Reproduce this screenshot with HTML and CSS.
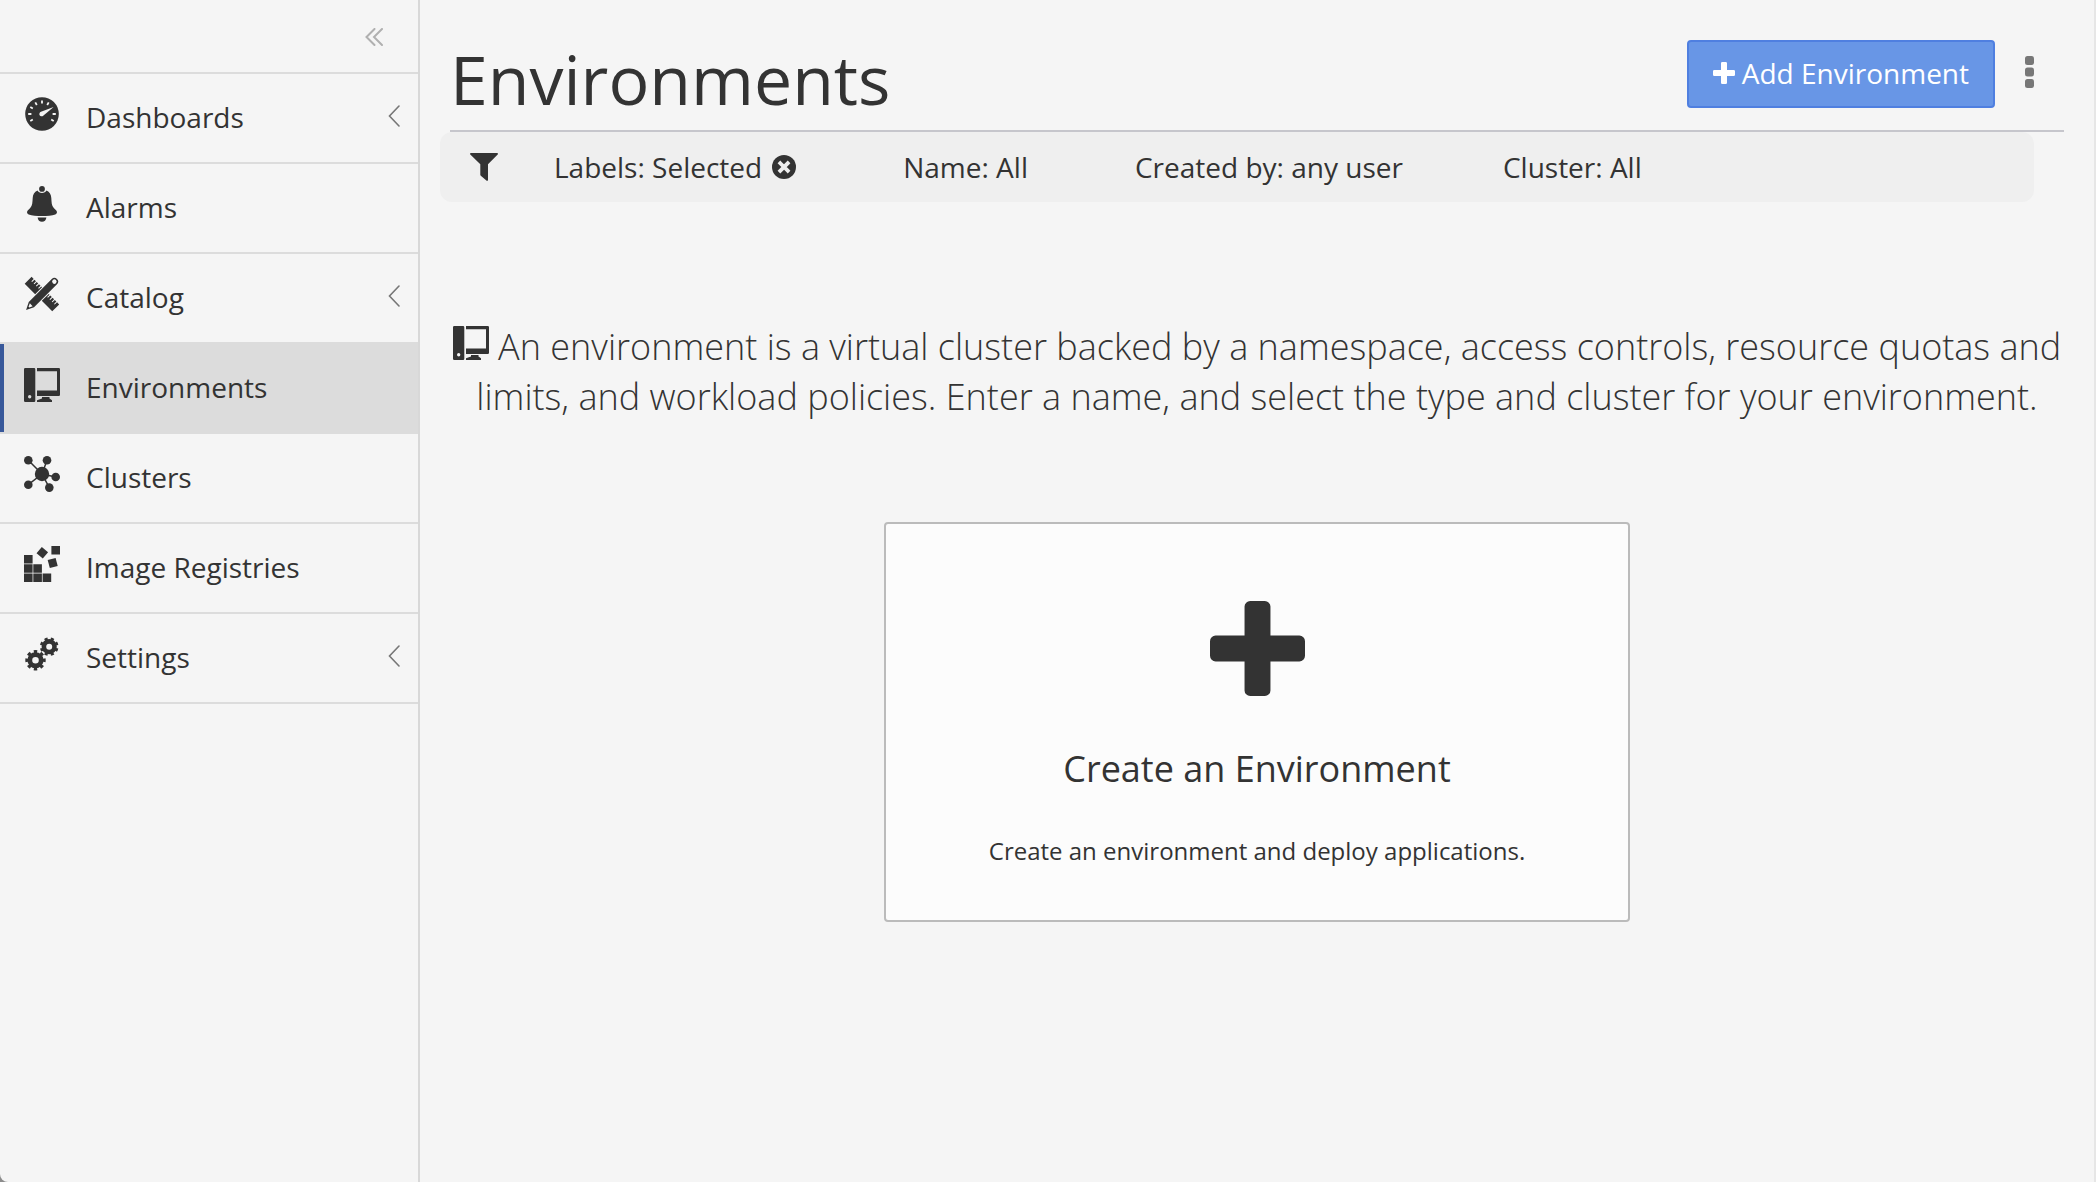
FILE: index.html
```html
<!DOCTYPE html>
<html lang="en">
<head>
<meta charset="utf-8">
<meta name="viewport" content="width=device-width, initial-scale=1">
<title>Environments</title>
<link rel="stylesheet" href="styles.css">
</head>
<body>
<svg class="symbols" aria-hidden="true">
  <symbol id="computer" viewBox="0 0 36 36">
    <path fill-rule="evenodd" d="M1.2 2h8.9a1.200 1.200 0 0 1 1.200 1.200v31.600a1.200 1.200 0 0 1-1.200 1.200H1.200A1.200 1.200 0 0 1 0 34.800V3.200A1.200 1.200 0 0 1 1.200 2zM5.700 29a1.700 1.700 0 1 0 0 3.400 1.700 1.700 0 0 0 0-3.400z"/>
    <path fill-rule="evenodd" d="M13 2h21.800A1.200 1.200 0 0 1 36 3.200v25.600a1.200 1.200 0 0 1-1.200 1.200H13v-5.500h20V5.300H13z"/>
    <path d="M18 31h7.500v1.500l2.500 1.800V36H13v-1.700l5-1.800z"/>
  </symbol>
  <symbol id="plus" viewBox="0 0 22 22">
    <path d="M9.300 0h3.400A1.300 1.300 0 0 1 14 1.300V8h6.700A1.300 1.300 0 0 1 22 9.300v3.400a1.300 1.300 0 0 1-1.300 1.300H14v6.700a1.300 1.300 0 0 1-1.300 1.300H9.300A1.300 1.300 0 0 1 8 20.700V14H1.300A1.300 1.300 0 0 1 0 12.700V9.300A1.300 1.300 0 0 1 1.300 8H8V1.300A1.300 1.300 0 0 1 9.300 0z"/>
  </symbol>
  <symbol id="chevron" viewBox="0 0 12 22">
    <path d="M11 1 1.500 11 11 21" fill="none" stroke="#777" stroke-width="1.600" stroke-linecap="round"/>
  </symbol>
</svg>
<div class="app">
  <aside class="sidebar">
    <div class="sidebar-top">
      <button class="collapse" aria-label="Collapse menu">
        <svg width="18" height="18" viewBox="0 0 18 18"><path d="M9.500 1 1.500 9l8 8M17 1 9 9l8 8" fill="none" stroke="#b0b0b0" stroke-width="2" stroke-linecap="round"/></svg>
      </button>
    </div>
    <nav class="menu">
      <a class="item" href="#dashboards">
        <svg class="icon" viewBox="0 0 36 36">
          <circle cx="18" cy="18" r="16.800"/>
          <g stroke="#f5f5f5" stroke-width="1.800">
            <path d="M18 4.500v3M4.200 18h3.200M28.600 18h3.200M11.300 6.400l1.500 2.600M24.700 6.400l-1.500 2.600M6.300 11l2.500 1.500M6.300 25l2.500-1.500M29.700 25l-2.500-1.500"/>
          </g>
          <path fill="#f5f5f5" d="M29.600 11 17 15.800a2.300 2.300 0 1 0 2.200 3.900z"/>
        </svg>
        <span class="label">Dashboards</span>
        <svg class="chevron"><use href="#chevron"/></svg>
      </a>
      <a class="item" href="#alarms">
        <svg class="icon" viewBox="0 0 36 36">
          <circle cx="18" cy="2.900" r="2.900"/>
          <path d="M13.500 4.600c.8 1.500 2.400 2.500 4.500 2.500s3.700-1 4.500-2.500c3.200 1.300 4.600 4.200 4.800 7.400.3 4.200.2 7.600 2.500 10l2.500 2.600c1.300 1.500.7 3.200-1 3.900-3.300 1.200-8 1.600-13.300 1.600s-10-.4-13.300-1.600c-1.700-.7-2.300-2.400-1-3.900L6.200 22c2.300-2.400 2.200-5.800 2.500-10 .2-3.200 1.600-6.100 4.800-7.400zM13.600 31.400h8.800c-.3 2.600-2 4.400-4.400 4.400s-4.100-1.800-4.400-4.400z"/>
        </svg>
        <span class="label">Alarms</span>
      </a>
      <a class="item" href="#catalog">
        <svg class="icon" viewBox="0 0 36 36">
          <g transform="rotate(45 18 18)">
            <path d="M-1.500 13.200h3v3.300h1v-3.300h2.200v3.300h1v-3.300h2.200v3.300h1v-3.300h2.200v3.300h1v-3.300h1.200V23H-1.500zM22.700 13.200h1.200v3.300h1v-3.300h2.200v3.300h1v-3.300h2.200v3.300h1v-3.300h2.200v3.300h1v-3.300h3V23H22.700z"/>
          </g>
          <path transform="rotate(-45 18 18)" fill-rule="evenodd" d="M-4.500 18 3 14.300h32.500a3.700 3.700 0 0 1 0 7.400H3zM-.5 17.500 2.800 16v4l-3.300-1.500zM35.500 15.800a2.200 2.200 0 1 0 0 4.400 2.200 2.200 0 0 0 0-4.400z"/>
        </svg>
        <span class="label">Catalog</span>
        <svg class="chevron"><use href="#chevron"/></svg>
      </a>
      <a class="item active" href="#environments" aria-current="page">
        <svg class="icon"><use href="#computer"/></svg>
        <span class="label">Environments</span>
      </a>
      <a class="item" href="#clusters">
        <svg class="icon" viewBox="0 0 36 36">
          <path stroke="#333" stroke-width="1.500" d="M18 18 4.300 4.300M18 18l5-13.700M18 18l13.700 3M18 18l7.300 13.700M18 18 4.300 28.700"/>
          <circle cx="18" cy="18" r="7.200"/><circle cx="4.300" cy="4.300" r="4.300"/><circle cx="23" cy="4.300" r="4.300"/><circle cx="31.700" cy="21" r="4.300"/><circle cx="25.300" cy="31.600" r="4.300"/><circle cx="4.300" cy="28.700" r="4.300"/>
        </svg>
        <span class="label">Clusters</span>
      </a>
      <a class="item" href="#registries">
        <svg class="icon" viewBox="0 0 36 36">
          <path d="M0 9h8.600v8.600H0zM0 18.200h8.600v8.600H0zM9.300 18.200h8.600v8.600H9.300zM0 27.400h8.600V36H0zM9.300 27.400h8.600V36H9.300zM18.600 27.400h8.600V36h-8.600zM27.400 0H36v8.600h-8.600z"/>
          <path transform="rotate(40 18.300 6.700)" d="M14.200 2.600h8.200v8.200h-8.200z"/>
          <path transform="rotate(-15 28.700 17)" d="M24.600 12.900h8.200v8.200h-8.200z"/>
        </svg>
        <span class="label">Image Registries</span>
      </a>
      <a class="item" href="#settings">
        <svg class="icon" viewBox="0 0 36 36">
          <g fill="none" stroke="#333">
            <circle cx="11.500" cy="24.300" r="5.700" stroke-width="4.800"/>
            <circle cx="11.500" cy="24.300" r="8.400" stroke-width="3.600" pathLength="16" stroke-dasharray="1 1" stroke-dashoffset=".5"/>
            <circle cx="25.200" cy="10.700" r="5.300" stroke-width="4.600"/>
            <circle cx="25.200" cy="10.700" r="7.600" stroke-width="3.400" pathLength="16" stroke-dasharray="1 1" stroke-dashoffset="1.500"/>
          </g>
        </svg>
        <span class="label">Settings</span>
        <svg class="chevron"><use href="#chevron"/></svg>
      </a>
    </nav>
  </aside>

  <main class="main">
    <header class="page-header">
      <h1>Environments</h1>
      <div class="actions">
        <button class="add"><svg width="22" height="22"><use href="#plus"/></svg>Add Environment</button>
        <button class="more" aria-label="More actions">
          <svg width="10" height="32" viewBox="0 0 10 32"><rect x="0" y="0" width="9" height="9" rx="2.500"/><rect x="0" y="11.500" width="9" height="9" rx="2.500"/><rect x="0" y="23" width="9" height="9" rx="2.500"/></svg>
        </button>
      </div>
    </header>

    <div class="filters">
      <svg class="funnel" viewBox="0 0 28 28"><path d="M1 0h26c1 0 1.300 1 .7 1.600L18 11.300v15.500c0 1-.9 1.400-1.600.8l-5.600-4.800a1.500 1.500 0 0 1-.5-1.100V11.300L.3 1.600C-.3 1 0 0 1 0z"/></svg>
      <button class="filter">Labels: Selected
        <svg width="24" height="24" viewBox="0 0 24 24"><circle cx="12" cy="12" r="12"/><path d="m8.300 8.300 7.400 7.400m0-7.400-7.400 7.400" stroke="#efefef" stroke-width="3.800" stroke-linecap="square"/></svg>
      </button>
      <button class="filter">Name: All</button>
      <button class="filter">Created by: any user</button>
      <button class="filter">Cluster: All</button>
    </div>

    <p class="intro"><svg class="intro-icon"><use href="#computer"/></svg> An environment is a virtual cluster backed by a namespace, access controls, resource quotas and limits, and workload policies. Enter a name, and select the type and cluster for your environment.</p>

    <button class="card">
      <svg class="card-plus"><use href="#plus"/></svg>
      <span class="card-title">Create an Environment</span>
      <span class="card-text">Create an environment and deploy applications.</span>
    </button>
  </main>
</div>
</body>
</html>
```
FILE: styles.css
```css
* {
  box-sizing: border-box;
}

html {
  background: #8c8c8c;
}

body {
  margin: 0;
  font-family: "Open Sans", "Noto Sans", sans-serif;
  font-size: 28px;
  color: #333;
}

svg {
  display: block;
  flex: none;
  fill: currentColor;
}

button {
  margin: 0;
  padding: 0;
  border: 0;
  background: none;
  font: inherit;
  color: inherit;
  cursor: pointer;
}

.symbols {
  display: none;
}

.app {
  display: flex;
  min-height: 100vh;
  background: #f5f5f5;
  border-right: 2px solid #e6e6e6;
  border-bottom-left-radius: 8px;
}

.sidebar {
  flex: none;
  width: 420px;
  border-right: 2px solid #d8d8d8;
}

.sidebar-top {
  display: flex;
  justify-content: flex-end;
  height: 74px;
  padding: 2px 35px 0 0;
  border-bottom: 2px solid #dcdcdc;
}

.item {
  display: flex;
  gap: 26px;
  padding: 22px 18px 24px 24px;
  border-bottom: 2px solid #dcdcdc;
  color: inherit;
  text-decoration: none;
}

.item.active {
  background: #dcdcdc;
  box-shadow: inset 4px 0 #38589a;
}

.icon {
  width: 36px;
  height: 36px;
}

.label {
  flex: 1;
  line-height: 42px;
}

.chevron {
  align-self: center;
  width: 12px;
  height: 22px;
  margin-bottom: 2px;
}

.main {
  flex: 1;
  min-width: 0;
  padding: 0 30px;
}

.page-header {
  display: flex;
  justify-content: space-between;
  align-items: flex-start;
  padding: 33px 0 5px;
  border-bottom: 2px solid #c6c6cc;
}

h1 {
  margin: 0;
  font-size: 68px;
  font-weight: 400;
  line-height: 92px;
}

.actions {
  display: flex;
  gap: 21px;
  padding: 7px 20px 0 0;
}

.add {
  display: flex;
  align-items: center;
  gap: 7px;
  height: 68px;
  padding: 0 24px 2px;
  border: 2px solid #4f7fe0;
  border-radius: 4px;
  background: #6896e6;
  color: #fff;
}

.more {
  display: flex;
  justify-content: center;
  width: 28px;
  padding-top: 16px;
  color: #777;
}

.filters {
  display: flex;
  align-items: center;
  height: 70px;
  margin: 0 30px 0 -10px;
  padding: 0 30px;
  border-radius: 12px;
  background: #efefef;
}

.funnel {
  width: 28px;
  height: 28px;
  margin-right: 56px;
}

.filter {
  display: flex;
  align-items: center;
  gap: 10px;
  margin-right: 107px;
  white-space: nowrap;
}

.filter:nth-last-child(2) {
  margin-right: 100px;
}

.intro {
  margin: 120px 0 100px;
  font-size: 36px;
  font-weight: 300;
  line-height: 50px;
  text-align: center;
}

.intro-icon {
  display: inline-block;
  width: 36px;
  height: 36px;
  vertical-align: baseline;
}

.card {
  display: flex;
  flex-direction: column;
  align-items: center;
  width: 746px;
  max-width: 100%;
  margin: 0 auto;
  padding: 77px 24px 52px;
  border: 2px solid #bbb;
  border-radius: 4px;
  background: #fcfcfc;
}

.card-plus {
  width: 95px;
  height: 95px;
}

.card-title {
  margin: 48px 0 40px;
  font-size: 36px;
  line-height: 50px;
}

.card-text {
  font-size: 24px;
  line-height: 34px;
}
```
